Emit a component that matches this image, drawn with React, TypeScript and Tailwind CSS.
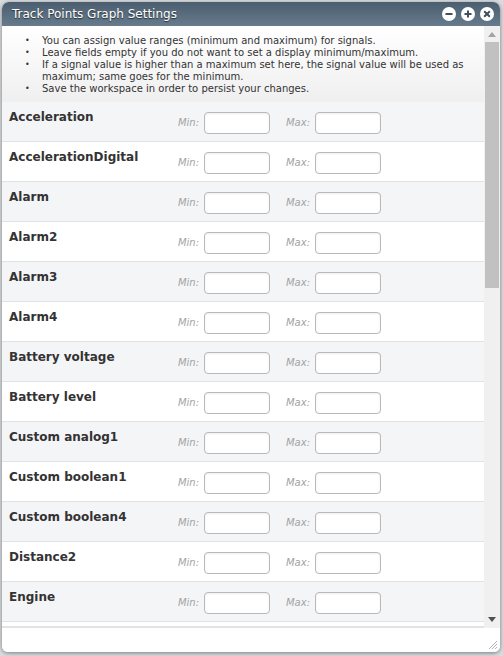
import React from "react";

const signals = [
  "Acceleration",
  "AccelerationDigital",
  "Alarm",
  "Alarm2",
  "Alarm3",
  "Alarm4",
  "Battery voltage",
  "Battery level",
  "Custom analog1",
  "Custom boolean1",
  "Custom boolean4",
  "Distance2",
  "Engine",
];

const notes = [
  "You can assign value ranges (minimum and maximum) for signals.",
  "Leave fields empty if you do not want to set a display minimum/maximum.",
  "If a signal value is higher than a maximum set here, the signal value will be used as maximum; same goes for the minimum.",
  "Save the workspace in order to persist your changes.",
];

function HeaderButton({ kind }: { kind: "min" | "max" | "close" }) {
  return (
    <span className="w-[14px] h-[14px] rounded-full bg-white flex items-center justify-center">
      <svg width="10" height="10" viewBox="0 0 10 10">
        {kind === "min" && <rect x="1.5" y="4" width="7" height="2" fill="#3f4f5e" />}
        {kind === "max" && (
          <path d="M4 1.5h2v2.5h2.5v2H6v2.5H4V6H1.5V4H4z" fill="#3f4f5e" />
        )}
        {kind === "close" && (
          <path d="M2.2 2.2l5.6 5.6M7.8 2.2L2.2 7.8" stroke="#3f4f5e" strokeWidth="2" />
        )}
      </svg>
    </span>
  );
}

function RangeInput({ label }: { label: string }) {
  return (
    <div className="flex items-center">
      <span className="italic text-[10px] text-[#a3a3a3] w-[28px] text-right mr-[5px]">{label}:</span>
      <input
        className="w-[66px] h-[22px] rounded-[4px] border border-[#b9b9b9] bg-white shadow-[inset_0_1px_2px_rgba(0,0,0,0.08)] outline-none"
        type="text"
      />
    </div>
  );
}

export default function App() {
  return (
    <div className="w-[503px] h-[656px] bg-[#d9dde0] relative overflow-hidden font-['DejaVu_Sans',Verdana,sans-serif]">
      <div className="absolute left-[2px] top-[2px] w-[498px] h-[650px] rounded-t-[7px] rounded-b-[6px] bg-white shadow-[0_1px_4px_rgba(0,0,0,0.45)] flex flex-col overflow-hidden">
        {/* title bar */}
        <div className="h-[24px] shrink-0 bg-gradient-to-b from-[#4a5e70] to-[#687b8c] flex items-center pl-[10px] pr-[6px]">
          <span className="text-white text-[12px] [text-shadow:0_1px_1px_rgba(0,0,0,0.6)] flex-1">
            Track Points Graph Settings
          </span>
          <div className="flex gap-[5px]">
            <HeaderButton kind="min" />
            <HeaderButton kind="max" />
            <HeaderButton kind="close" />
          </div>
        </div>

        <div className="flex flex-1 min-h-0">
          <div className="flex-1 flex flex-col min-w-0">
            {/* hints */}
            <div className="h-[76px] shrink-0 bg-gradient-to-b from-white to-[#efefef] pt-[9px] pl-[23px] pr-[8px]">
              <ul className="text-[10px] leading-[12px] text-[#333]">
                {notes.map((n) => (
                  <li key={n} className="flex">
                    <span className="w-[17px] shrink-0 text-[8px]">•</span>
                    <span>{n}</span>
                  </li>
                ))}
              </ul>
            </div>
            {/* signal rows */}
            <div className="flex-1 overflow-hidden border-b-2 border-[#e3e3e3]">
              {signals.map((s, i) => (
                <div
                  key={s}
                  className={`h-[40px] flex border-b border-[#e2e2e2] ${i % 2 === 0 ? "bg-[#f4f5f7]" : "bg-white"}`}
                >
                  <div className="w-[165px] pl-[7px] pt-[6px] font-bold text-[12px] text-[#333]">{s}</div>
                  <div className="flex items-center gap-[12px] pt-[2px] pl-[4px]">
                    <RangeInput label="Min" />
                    <RangeInput label="Max" />
                  </div>
                </div>
              ))}
              <div className="h-[40px] bg-white" />
            </div>
          </div>
          {/* scrollbar */}
          <div className="w-[16px] shrink-0 bg-[#f0f0f0] flex flex-col items-center pb-[1px]">
            <div className="h-[16px] flex items-center justify-center">
              <svg width="8" height="5" viewBox="0 0 8 5"><path d="M0 5L4 0 8 5z" fill="#a3a3a3" /></svg>
            </div>
            <div className="w-[14px] h-[246px] bg-[#c1c1c1]" />
            <div className="flex-1" />
            <div className="h-[16px] flex items-center justify-center">
              <svg width="8" height="5" viewBox="0 0 8 5"><path d="M0 0L8 0 4 5z" fill="#505050" /></svg>
            </div>
          </div>
        </div>

        {/* footer */}
        <div className="h-[24px] shrink-0 bg-white flex justify-end items-end pr-[2px] pb-[2px]">
          <svg width="11" height="11" viewBox="0 0 11 11">
            <path d="M10 2L2 10M10 5L5 10M10 8L8 10" stroke="#b5b5b5" strokeWidth="1" />
          </svg>
        </div>
      </div>
    </div>
  );
}
